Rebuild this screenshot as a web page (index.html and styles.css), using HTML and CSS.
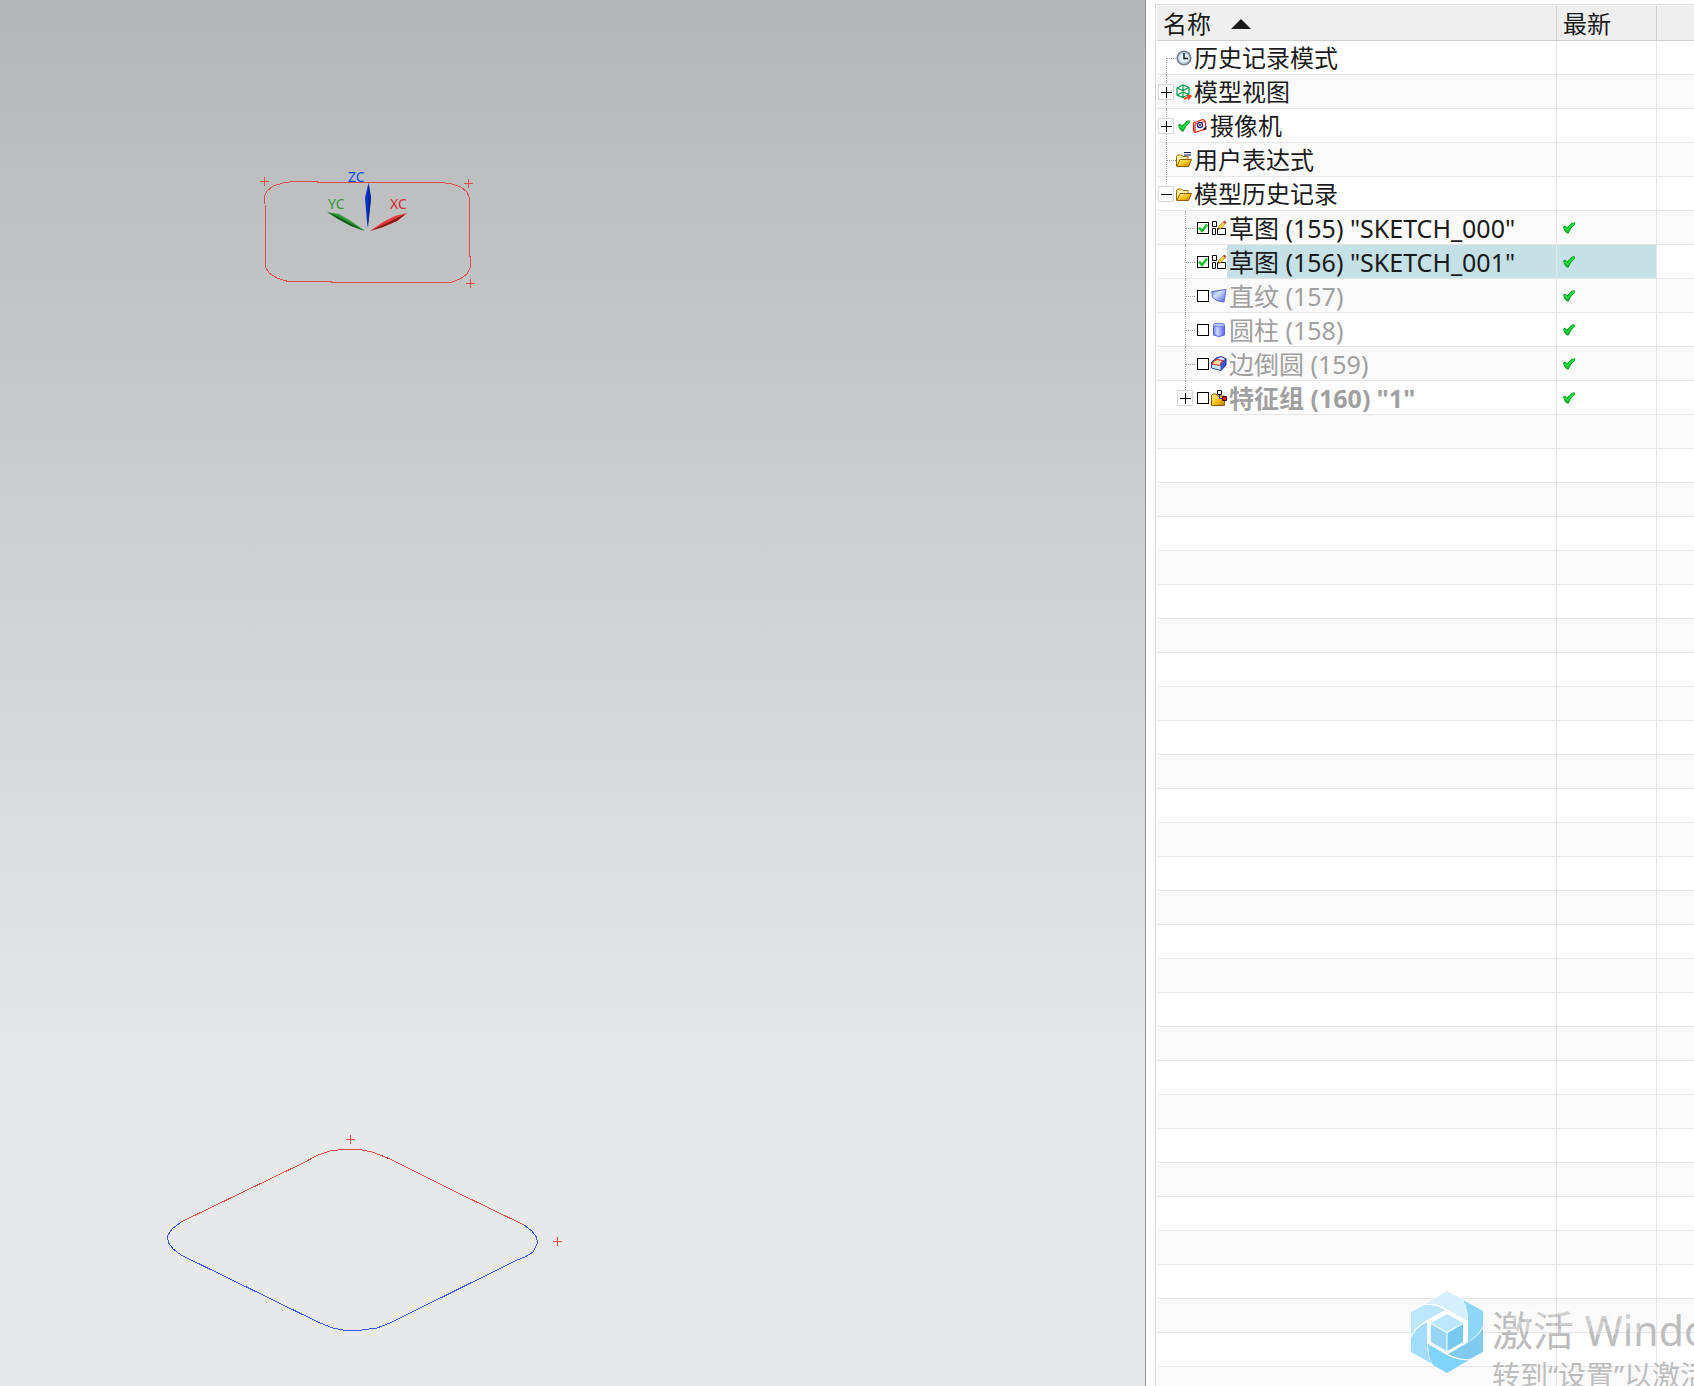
FILE: index.html
```html
<!DOCTYPE html>
<html lang="zh-CN">
<head>
<meta charset="utf-8">
<title>部件导航器</title>
<link rel="stylesheet" href="styles.css">
</head>
<body>
<svg class="symbols" aria-hidden="true">
  <defs>
    <symbol id="tick" viewBox="0 0 12 12">
      <path d="M0 5 2 3.500l2 2L8.500 1 11.500 0l.5 2.500L8.500 6 5.500 11.500H4L1.500 9Z" fill="#0f9c22"/>
      <path d="M1.500 5.500 4.500 8.500 7.500 4.500 11 1.500" fill="none" stroke="#1cdc40" stroke-width="2"/>
    </symbol>
    <linearGradient id="gold" x1="0" y1="0" x2="1" y2="1">
      <stop offset="0" stop-color="#fff3a0"/><stop offset=".5" stop-color="#fbc61c"/><stop offset="1" stop-color="#b87a00"/>
    </linearGradient>
    <linearGradient id="blue" x1="0" y1="0" x2="1" y2="0">
      <stop offset="0" stop-color="#6878f4"/><stop offset=".35" stop-color="#d0d8ff"/><stop offset="1" stop-color="#5060ee"/>
    </linearGradient>
    <linearGradient id="sheet" x1="0" y1="0" x2="1" y2="1">
      <stop offset="0" stop-color="#6f86f5"/><stop offset=".4" stop-color="#cfe0ff"/><stop offset="1" stop-color="#4a55e0"/>
    </linearGradient>
    <symbol id="folder" viewBox="0 0 16 16">
      <path d="M.5 14V4.500l1-1.500h4l1.500 1.500h5V7" fill="#fff0a8" stroke="#a06c00"/>
      <path d="M.8 14.500 4 7.500h11.500l-3 7Z" fill="url(#gold)" stroke="#8f5d00"/>
    </symbol>
    <symbol id="sketch" viewBox="0 0 16 16">
      <path d="M1.500 1.500h4v5h-4zM1.500 8.500h3v6h-3zM6.500 8.500h8v6h-8z" fill="#fff" stroke="#000"/>
      <path d="m7 9.500 1-3.500 4.500-4.500 2 2L10 8.500Z" fill="#f7cf4a" stroke="#b07818" stroke-width=".6"/>
      <path d="m12 2 1.500-1.500 2 2L14 4Z" fill="#c8452a"/>
      <path d="m7 9.500.5-2 1.500 1.500Z" fill="#402000"/>
    </symbol>
  </defs>
</svg>

<div class="app">
  <main class="viewport">
    <svg class="scene" role="img" aria-label="模型视图">
      <g class="curve red">
        <path d="M265 203 264 203V197L267 191 273 186 283 183 292 181.500H317L318 182.500H440L450 183.500 461 187 467 192 469.500 198V256L470.500 257V267L467 274 460 279 451 282.500H331V281.500H288L277 278 269 273 265.500 267Z"/>
        <path d="M181 1222 303 1163 318 1155 330 1151 342 1149.500H359L372 1152 380 1155 390 1159 458 1193 524 1225"/>
        <path d="M260 181.500h9M264.500 177v9M464 183.500h9M468.500 179v9M466 283.500h9M470.500 279v9M346 1139.500h9M350.500 1135v9M553 1241.500h9M557.500 1237v9"/>
      </g>
      <path class="curve blue" d="M524 1225 532 1231 536.500 1237 537.500 1243 533 1252 525 1257 517 1260 390 1323 377 1328 362 1330 346 1330.500 333 1328 320 1323 181 1255 173 1249 168.500 1243 167.500 1236 172 1229 181 1222"/>
      <g>
        <path d="M367.500 228 365 198 368.500 183 371 198Z" fill="#0432c8"/>
        <path d="m368.500 183 2.500 15-3 30Z" fill="#0a2494"/>
        <path d="m365 231-14-5-13-7-11-7 12 2 12 7Z" fill="#2f9a34"/>
        <path d="m365 231-14-5-13-7-11-7 10 4Z" fill="#175c1c"/>
        <path d="m370 231 13-9 12-6 12-3-10 8-14 6Z" fill="#e33a3a"/>
        <path d="m370 231 13-4 14-6 10-8-12 6Z" fill="#8c1c1c"/>
      </g>
      <g class="axis">
        <text x="348" y="182" fill="#0b48ff">ZC</text>
        <text x="328" y="209" fill="#2f9a34">YC</text>
        <text x="390" y="209" fill="#d22a32">XC</text>
      </g>
    </svg>
  </main>

  <aside class="panel">
    <div class="frame">
      <table class="tree">
        <colgroup><col class="c-name"><col class="c-state"><col></colgroup>
        <thead>
          <tr><th><span class="sort">名称 <svg width="20" height="10" viewBox="0 0 20 10"><path d="M10 0 20 10H0Z" fill="#1a1a1a"/></svg></span></th><th>最新</th><th></th></tr>
        </thead>
        <tbody>
          <tr><td><div class="node first"><span class="stub"></span>
            <svg class="icon" viewBox="0 0 16 16"><circle cx="8" cy="8" r="6.800" fill="#b8d4ec" stroke="#777b82" stroke-width="1.600"/><circle cx="8" cy="8" r="4.600" fill="#e6f2fc"/><path d="M8 3v5.500h4" fill="none" stroke="#111" stroke-width="1.400"/></svg>
            <span class="label">历史记录模式</span></div></td><td></td><td></td></tr>
          <tr><td><div class="node"><button class="expander" aria-label="展开"></button>
            <svg class="icon" viewBox="0 0 16 16"><path d="M1 4 7 1l6 2.500v7L7 13.500 1 11ZM1 4 7 6.500 13 3.500M7 1v12.500M1 11 7 8l6 2.500" fill="none" stroke="#0b9a50" stroke-width="1.200"/><path d="m8 15 7-3M12 15.500l3-3.500-4-.5" fill="none" stroke="#f03a18" stroke-width="1.400"/></svg>
            <span class="label">模型视图</span></div></td><td></td><td></td></tr>
          <tr><td><div class="node"><button class="expander" aria-label="展开"></button>
            <svg class="tick lead"><use href="#tick"/></svg>
            <svg class="icon" viewBox="0 0 16 16"><path d="M1.500 5 11 1.500l2.500 2V11L3 14.500l-1.500-2ZM3 6l10.500-2.500M3 6v8.500" fill="#fff" stroke="#e0301c" stroke-width="1.200"/><circle cx="8" cy="7" r="2.600" fill="#d8d8f8" stroke="#1c2a80" stroke-width="1.200"/><circle cx="8" cy="7" r="1" fill="#1c2a80"/><path d="m11 11 3.500-3v3L12 12.500Z" fill="#301010"/></svg>
            <span class="label">摄像机</span></div></td><td></td><td></td></tr>
          <tr><td><div class="node"><span class="stub"></span>
            <svg class="icon" viewBox="0 0 16 16"><use href="#folder"/><path d="M8 .5h7M8 3h7" stroke="#10106e" stroke-width="1.200"/></svg>
            <span class="label">用户表达式</span></div></td><td></td><td></td></tr>
          <tr><td><div class="node last"><button class="expander open" aria-label="折叠"></button>
            <svg class="icon"><use href="#folder"/></svg>
            <span class="label">模型历史记录</span></div></td><td></td><td></td></tr>
          <tr><td><div class="node child"><span class="stub"></span><input type="checkbox" id="f155" checked>
            <svg class="icon"><use href="#sketch"/></svg>
            <label class="label" for="f155">草图 (155) "SKETCH_000"</label></div></td><td><svg class="tick"><use href="#tick"/></svg></td><td></td></tr>
          <tr class="selected"><td><div class="node child"><span class="stub"></span><input type="checkbox" id="f156" checked>
            <svg class="icon"><use href="#sketch"/></svg>
            <label class="label" for="f156">草图 (156) "SKETCH_001"</label></div></td><td><svg class="tick"><use href="#tick"/></svg></td><td></td></tr>
          <tr><td><div class="node child off"><span class="stub"></span><input type="checkbox" id="f157">
            <svg class="icon" viewBox="0 0 16 16"><path d="M.8 3.500 15 1.500l-2 12.500Q4 13 1.500 9Z" fill="url(#sheet)" stroke="#5a66d8"/></svg>
            <label class="label" for="f157">直纹 (157)</label></div></td><td><svg class="tick"><use href="#tick"/></svg></td><td></td></tr>
          <tr><td><div class="node child off"><span class="stub"></span><input type="checkbox" id="f158">
            <svg class="icon" viewBox="0 0 16 16"><path d="M2.500 3v10q5.500 3 11 0V3Z" fill="url(#blue)" stroke="#5a66e0"/><ellipse cx="8" cy="3" rx="5.500" ry="1.800" fill="#b8c2ff" stroke="#7480ec"/></svg>
            <label class="label" for="f158">圆柱 (158)</label></div></td><td><svg class="tick"><use href="#tick"/></svg></td><td></td></tr>
          <tr><td><div class="node child off"><span class="stub"></span><input type="checkbox" id="f159">
            <svg class="icon" viewBox="0 0 16 16"><path d="M.7 6 6 1.500 10 .7l5 2V9l-5 5.500-9.300-2.500Z" fill="#3a56e0" stroke="#1c2890"/><path d="m1 8.500 8.500 1V14L1 11.800Z" fill="#c8e8fc"/><path d="m6 2.500 4-1.300 4 1.500L11.500 5Z" fill="#e0ecff"/><path d="M1 8q1-3.500 5-4.500l6 1q-2.500 1.500-3 5Z" fill="#ffd8a0" stroke="#e03818"/></svg>
            <label class="label" for="f159">边倒圆 (159)</label></div></td><td><svg class="tick"><use href="#tick"/></svg></td><td></td></tr>
          <tr><td><div class="node child last off group"><button class="expander" aria-label="展开"></button><input type="checkbox" id="f160">
            <svg class="icon" viewBox="0 0 16 16"><path d="M.5 15.500v-10L2 4h3.500l1 2h7v9.500Z" fill="url(#gold)" stroke="#8f5d00"/><path d="M8.500 4v4.500h4" fill="none" stroke="#1830c0"/><path d="M6.500.5h4v4h-4z" fill="#fff" stroke="#000"/><path d="M11.500 6.500h4v4h-4z" fill="#e01818" stroke="#400"/></svg>
            <label class="label" for="f160">特征组 (160) "1"</label></div></td><td><svg class="tick"><use href="#tick"/></svg></td><td></td></tr>
        </tbody>
      </table>
      <div class="blank-rows"></div>
    </div>
  </aside>
</div>

<div class="notice">
  <svg class="logo" width="72" height="82" viewBox="0 0 72 82">
    <path d="M0 20 36 0l36 20v41L36 82 0 61Z" fill="#fff"/>
    <path d="M14 13 36 0 51 8Q57 18 56 30L36 18Q26 12 14 13Z" fill="#d6effc"/>
    <path d="M0 21 13 14Q24 13 34 19L16 29Q4 36 0 45Z" fill="#bce6fb"/>
    <path d="M0 47Q4 37 16 31V52Q16 64 21 73L0 61Z" fill="#a4ddf9"/>
    <path d="M17 53 36 64Q47 70 58 69L36 82 22 74Q17 66 17 53Z" fill="#7fd2fa"/>
    <path d="M37 63 56 52Q67 46 72 37V61L59 68Q48 69 37 63Z" fill="#80caf0"/>
    <path d="M52 9 72 20V35Q68 44 57 51V30Q57 18 52 9Z" fill="#8dd6f8"/>
    <path d="M36 23 52 32 36 41 20 32Z" fill="#bce6fb"/>
    <path d="M20 33 35.500 42V60L20 51Z" fill="#98d5f5"/>
    <path d="M52 33 36.500 42V60L52 51Z" fill="#78c8ef"/>
  </svg>
  <div class="notice-text">
    <p class="notice-title">激活 Windows</p>
    <p class="notice-body">转到“设置”以激活 Windows。</p>
    <span class="brand">3D世界网</span>
  </div>
</div>
</body>
</html>
```
FILE: styles.css
```css
* { box-sizing: border-box; }

body {
  margin: 0;
  background: #fff;
  color: #1a1a1a;
  font: 24px/33px "Noto Sans", "Noto Sans CJK SC", sans-serif;
  overflow: hidden;
}

.symbols { position: absolute; width: 0; height: 0; }

.app {
  display: grid;
  grid-template-columns: minmax(0, 1fr) 549px;
  height: 100vh;
}

.viewport {
  background: linear-gradient(#b5b6b8, #e6e8ea 78%, #e6e8ea);
  overflow: hidden;
}
.scene { display: block; width: 100%; height: 100%; }
.curve { fill: none; stroke-width: 1; shape-rendering: crispEdges; }
.red { stroke: #dc5046; }
.blue { stroke: #3c5aff; }
.axis { font-size: 14px; }

.panel {
  display: flex;
  border-left: 1px solid #8c9196;
  padding: 4px 0 0 9px;
  overflow: hidden;
}
.frame {
  flex: 1;
  display: flex;
  flex-direction: column;
  border: solid #d8d8d8;
  border-width: 1px 0 0 1px;
  padding: 1px 0 0 1px;
}

.tree { width: 100%; table-layout: fixed; border-collapse: separate; border-spacing: 0; }
.c-name { width: 400px; }
.c-state { width: 100px; }
.tree th, .tree td {
  padding: 0;
  border: solid #e6e6e6;
  border-width: 0 1px 1px 0;
}
.tree td { height: 34px; }
.tree th {
  height: 35px;
  padding: 1px 0 0 6px;
  background: #efefef;
  border-color: #cfcfcf;
  font-weight: 400;
  text-align: left;
}
.tree th:last-child, .tree td:last-child { border-right: 0; }
.tree tr:nth-child(even) td { background: #fafafa; }
.sort { display: flex; align-items: center; gap: 20px; }

.node { display: flex; align-items: center; height: 33px; padding-left: 1px; position: relative; }
.node.child { padding-left: 20px; }
.node > * { margin-top: 1px; }
.node::before {
  content: "";
  position: absolute;
  top: 0;
  bottom: -1px;
  left: 9px;
  margin: 0;
  border-left: 1px dotted #a0a0a0;
}
.node.child::before { left: 28px; }
.node.first::before { top: 17px; }
.node.last::before { bottom: 16px; }

.stub { width: 18px; height: 1px; flex: none; padding-left: 9px; }
.stub::before { content: ""; display: block; border-top: 1px dotted #a0a0a0; }
.expander {
  width: 16px;
  height: 16px;
  margin-right: 2px;
  padding: 0;
  flex: none;
  border: 1px solid #d8d8d8;
  position: relative;
  background:
    linear-gradient(#000, #000) center / 11px 1px no-repeat,
    linear-gradient(#000, #000) center / 1px 11px no-repeat,
    #fff;
}
.expander.open { background: linear-gradient(#000, #000) center / 11px 1px no-repeat, #fff; }
.icon { width: 16px; height: 16px; flex: none; }
.node .label {
  flex: 1;
  height: 33px;
  margin: 0;
  padding: 1px 0 0 2px;
  line-height: 32px;
  white-space: nowrap;
}
.node.child .label { font-size: 25px; }
.tick { display: block; width: 12px; height: 12px; flex: none; }
td > .tick { margin: 1px 0 0 6px; }
.tick.lead { margin-left: 2px; margin-right: 2px; }

.node input {
  appearance: none;
  width: 12px;
  height: 12px;
  margin: 1px 2px 0;
  flex: none;
  border: 1px solid #000;
  background: #fff;
}
.node input:checked {
  background: #fff url("data:image/svg+xml,%3Csvg xmlns='http://www.w3.org/2000/svg' viewBox='0 0 10 10'%3E%3Cpath d='M1 4.500 4 8 9 1.500' fill='none' stroke='%2312c02c' stroke-width='2.500'/%3E%3C/svg%3E");
}

.off .label { color: #a0a0a0; }
.group .label { font-weight: 700; }
.selected .label, .tree .selected td:nth-child(2) { background: #c5e0e6; }

/* Continues the row striping and column rules below the last feature */
.blank-rows {
  flex: 1;
  background:
    linear-gradient(#e6e6e6, #e6e6e6) 399px 0 / 1px 100% no-repeat,
    linear-gradient(#e6e6e6, #e6e6e6) 499px 0 / 1px 100% no-repeat,
    repeating-linear-gradient(#fafafa 0 33px, #e6e6e6 33px 34px, #fff 34px 67px, #e6e6e6 67px 68px);
}

.notice {
  position: absolute;
  left: calc(100% - 283px);
  right: 0;
  bottom: 0;
  height: 95px;
  display: flex;
  gap: 9px;
  overflow: hidden;
  color: #bdbdbd;
  pointer-events: none;
}
.logo { flex: none; }
.notice-text { position: relative; padding-top: 11px; white-space: nowrap; }
.notice-text p { margin: 0; }
.notice-title { font-size: 41px; line-height: 56px; }
.notice-body { font-size: 28px; line-height: 34px; }
.brand {
  position: absolute;
  top: 8px;
  left: 12px;
  color: #fff;
  font-size: 32px;
  font-weight: 700;
  line-height: 40px;
  opacity: .3;
}
```
